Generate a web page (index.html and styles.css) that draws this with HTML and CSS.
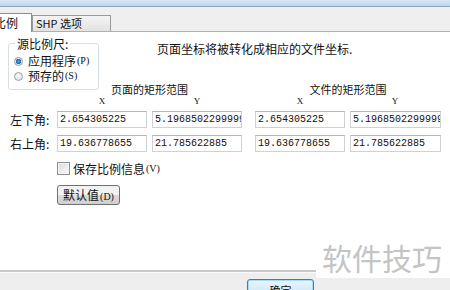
FILE: index.html
```html
<!DOCTYPE html>
<html lang="zh-CN">
<head>
    <meta charset="UTF-8">
    <title>比例</title>
    <link rel="stylesheet" href="styles.css">
</head>
<body>
    <div class="titlebar"></div>
    <div class="tabstrip">
        <div class="tab active">比例</div>
        <div class="tab">SHP 选项</div>
    </div>

    <div class="panel">
        <div class="top">
            <div class="source">
                <span class="legend">源比例尺:</span>
                <label class="radio"><span class="dot on"></span>应用程序<span class="key">(P)</span></label>
                <label class="radio"><span class="dot"></span>预存的<span class="key">(S)</span></label>
            </div>
            <div class="note">页面坐标将被转化成相应的文件坐标.</div>
        </div>

        <div class="ranges">
            <div class="row head">
                <span class="lbl"></span>
                <div class="pair">页面的矩形范围</div>
                <div class="pair">文件的矩形范围</div>
            </div>
            <div class="row axis">
                <span class="lbl"></span>
                <div class="pair"><span>X</span><span>Y</span></div>
                <div class="pair"><span>X</span><span>Y</span></div>
            </div>
            <div class="row values first">
                <span class="lbl">左下角:</span>
                <div class="pair">
                    <input type="text" value="2.654305225">
                    <input type="text" value="5.19685022999999">
                </div>
                <div class="pair">
                    <input type="text" value="2.654305225">
                    <input type="text" value="5.19685022999999">
                </div>
            </div>
            <div class="row values">
                <span class="lbl">右上角:</span>
                <div class="pair">
                    <input type="text" value="19.636778655">
                    <input type="text" value="21.785622885">
                </div>
                <div class="pair">
                    <input type="text" value="19.636778655">
                    <input type="text" value="21.785622885">
                </div>
            </div>
        </div>

        <label class="check"><span class="box"></span>保存比例信息<span class="key">(V)</span></label>
        <button type="button" class="btn">默认值<span class="key">(D)</span></button>
    </div>

    <div class="footer">
        <button type="button" class="btn ok">确定</button>
    </div>

    <div class="watermark">软件技巧</div>
</body>
</html>
```

FILE: styles.css
```css
body {
    margin: 0;
    width: 450px;
    height: 290px;
    overflow: hidden;
    position: relative;
    font-family: "Noto Sans CJK SC", "DejaVu Sans", sans-serif;
    font-size: 12px;
    color: #111;
    background-color: #eeeeee;
}
.titlebar {
    height: 6px;
    background: linear-gradient(#d4e7fa, #bcd5f0);
    border-bottom: 1px solid #96a3b1;
}
.tabstrip {
    height: 24px;
    display: flex;
    align-items: flex-end;
    background-color: #efefef;
    border-bottom: 1px solid #aeb0b3;
}
.tab {
    height: 15px;
    line-height: 15px;
    padding: 0 0 0 3px;
    width: 74px;
    border: 1px solid #9a9a9a;
    border-bottom: none;
    background: linear-gradient(#f4f4f4, #e2e2e2);
    font-size: 11px;
}
.tab.active {
    width: 40px;
    height: 18px;
    line-height: 18px;
    margin-left: -10px;
    margin-bottom: -1px;
    padding: 0;
    text-indent: 3px;
    background: #fff;
    border-color: #8d8d8d;
    font-size: 12px;
    position: relative;
}
.panel {
    height: 238px;
    background-color: #fff;
}
.top {
    display: flex;
    height: 50px;
}
.source {
    position: relative;
    margin: 11px 0 0 8px;
    padding: 10px 0 0 5px;
    width: 91px;
    height: 47px;
    box-sizing: border-box;
    border: 1px solid #d5dfe5;
    border-radius: 3px;
    flex-shrink: 0;
}
.legend {
    position: absolute;
    top: -7px;
    left: 6px;
    padding: 0 2px;
    line-height: 13px;
    background-color: #fff;
}
.radio {
    display: flex;
    align-items: center;
    height: 14px;
    line-height: 14px;
    margin-bottom: 1px;
    white-space: nowrap;
}
.dot {
    width: 9px;
    height: 9px;
    border-radius: 50%;
    border: 1px solid #9aa3ab;
    background: radial-gradient(circle at 50% 40%, #fdfdfd, #d8d8d8);
    margin-right: 5px;
    box-sizing: border-box;
    flex-shrink: 0;
}
.dot.on {
    border-color: #8e9aa6;
    background: radial-gradient(circle, #5aa4e4 0, #2466b0 2.4px, #eef1f4 3px, #f7f7f7 100%);
}
.key {
    font-family: "Liberation Serif", serif;
    font-size: 10px;
    margin-left: 1px;
}
.note {
    margin: 10px 0 0 58px;
    line-height: 14px;
    white-space: nowrap;
}
.ranges {
    padding-left: 10px;
}
.row {
    display: flex;
    align-items: center;
}
.lbl {
    width: 47px;
    flex-shrink: 0;
}
.pair {
    display: flex;
    gap: 5px;
    width: 185px;
    flex-shrink: 0;
}
.pair + .pair {
    margin-left: 13px;
    width: 186px;
}
.head {
    height: 13px;
    font-size: 11px;
}
.head .pair {
    justify-content: center;
}
.axis {
    height: 12px;
    font-family: "Liberation Serif", serif;
    font-size: 9px;
}
.axis .pair span {
    width: 90px;
    text-align: center;
}
.values {
    margin-top: 7px;
}
.values.first {
    margin-top: 4px;
}
input[type="text"] {
    width: 90px;
    height: 17px;
    margin: 0;
    padding: 0 0 0 2px;
    box-sizing: border-box;
    border: 1px solid #cfd1d4;
    border-top-color: #b4b6ba;
    font-family: "Liberation Mono", monospace;
    font-size: 10px;
    color: #111;
    outline: none;
}
.pair input:last-child {
    flex: 1;
}
.check {
    display: flex;
    align-items: center;
    height: 13px;
    margin: 10px 0 0 57px;
}
.box {
    width: 13px;
    height: 13px;
    box-sizing: border-box;
    border: 1px solid #8f8f8f;
    background: linear-gradient(135deg, #dcdcdc, #f8f8f8);
    box-shadow: inset 0 0 0 1px #f4f4f4;
    margin-right: 3px;
}
.btn {
    display: block;
    margin: 10px 0 0 57px;
    width: 63px;
    height: 20px;
    padding: 0;
    border: 1px solid #707070;
    border-radius: 3px;
    background: linear-gradient(#f2f2f2 50%, #dddddd 50%, #cfcfcf);
    font-family: "Noto Sans CJK SC", "DejaVu Sans", sans-serif;
    font-size: 12px;
    color: #111;
    line-height: 17px;
}
.footer {
    height: 20px;
    border-top: 2px solid #c9c9cd;
    box-shadow: inset 0 1px #fafafa;
    padding-top: 7px;
    box-sizing: border-box;
}
.btn.ok {
    margin: 0 0 0 247px;
    width: 67px;
    height: 21px;
    border-color: #3c7fb1;
    background: linear-gradient(#e8f5fc, #c4e3f6);
    box-shadow: inset 0 0 0 1px #a8dbf5;
    line-height: 16px;
    font-size: 11px;
}
.watermark {
    position: absolute;
    left: 316px;
    top: 236px;
    width: 134px;
    height: 42px;
    padding-left: 6px;
    box-sizing: border-box;
    background-color: #fff;
    color: #c4c4c4;
    font-size: 30px;
    line-height: 42px;
    white-space: nowrap;
}
```
